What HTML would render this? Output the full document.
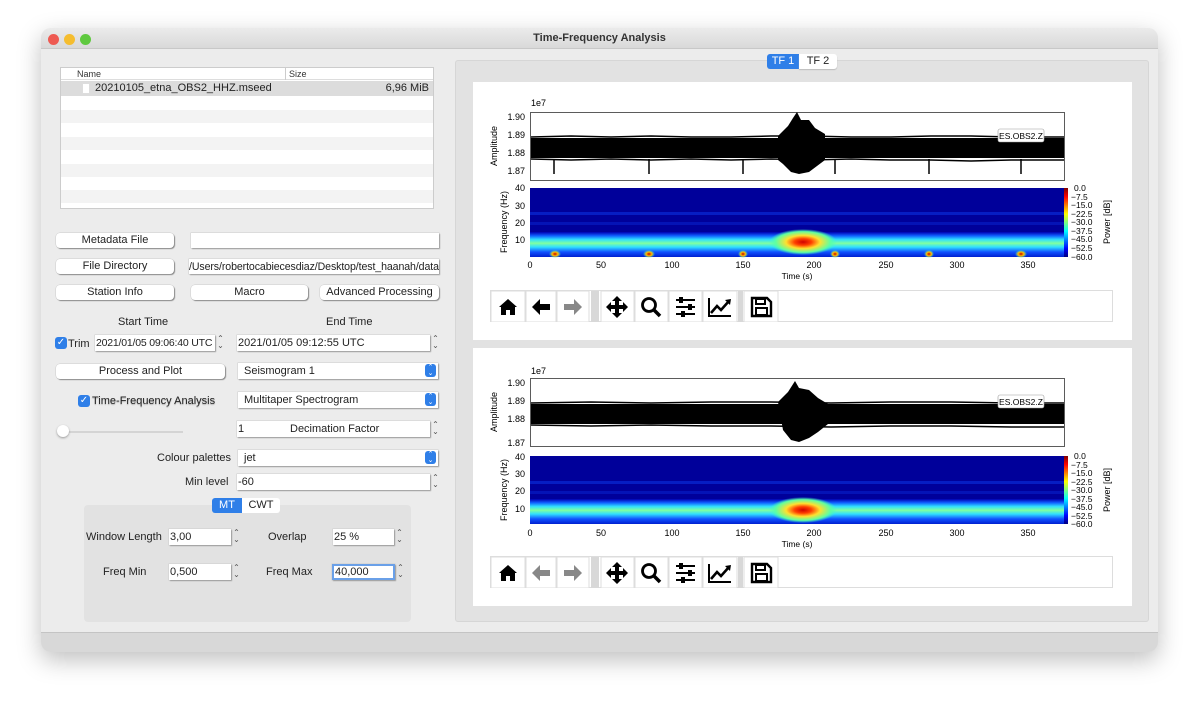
<!DOCTYPE html>
<html><head><meta charset="utf-8"><style>
*{box-sizing:border-box;margin:0;padding:0}
body{width:1200px;height:708px;background:#fff;font-family:"Liberation Sans",sans-serif;font-size:11px;color:#222;position:relative;overflow:hidden}
.a{position:absolute}
.win{left:41px;top:28px;width:1117px;height:624px;background:#ececec;border-radius:10px;box-shadow:0 8px 24px rgba(0,0,0,.25);overflow:hidden}
.title{left:0;top:0;width:1117px;height:21px;background:linear-gradient(#ebebeb,#d9d9d9);border-bottom:1px solid #c8c8c8;text-align:center;font-weight:bold;font-size:11px;line-height:21px;color:#333}
.dot{width:11px;height:11px;border-radius:50%;top:6px}
.btn{background:#fff;border-radius:4px;box-shadow:1px 1px 1px #888, 0 0 0 .5px #ccc;text-align:center;font-size:11px;line-height:15px;height:15px}
.field{background:#fff;box-shadow:1px 1px 1px #999, 0 0 0 .5px #ccc;font-size:11px;line-height:16px;height:16px;padding-left:4px;white-space:nowrap;overflow:hidden}
.spin{width:9px;height:16px;font-size:8px;line-height:7px;text-align:center;color:#555}
.sel{width:11px;height:13px;background:#2f7fe8;border-radius:3px;color:#fff;font-size:7px;line-height:6px;text-align:center;padding-top:1px}
.chk{width:12px;height:12px;background:#2f7fe8;border-radius:3px;color:#fff;font-size:10px;line-height:12px;text-align:center}
.lbl{font-size:11px}
.tb{background:#fff;height:32px;border:1px solid #ddd}
</style></head><body>
<div class="a win">
 <div class="a title">Time-Frequency Analysis</div>
 <div class="a dot" style="left:7px;background:#ee5a52"></div>
 <div class="a dot" style="left:23px;background:#f5bd2f"></div>
 <div class="a dot" style="left:39px;background:#5fc93f"></div>
 <div class="a" style="left:0;top:604px;width:1117px;height:20px;background:#d8d8d8;border-top:1px solid #c4c4c4"></div>
</div>
<!-- file list -->
<div class="a" style="left:60px;top:67px;width:374px;height:142px;background:#fff;border:1px solid #ccc">
 <div class="a" style="left:0;top:0;width:372px;height:12px;border-bottom:1px solid #ddd;font-size:9px;line-height:12px;color:#333"><span class="a" style="left:16px">Name</span><span class="a" style="left:224px;border-left:1px solid #ccc;padding-left:3px">Size</span></div>
 <div class="a" style="left:0;top:13px;width:372px;height:15px;background:#dcdcdc;font-size:11px;line-height:15px"><span class="a" style="left:21px;top:2px;width:8px;height:11px;background:#fff;border:1px solid #ddd"></span><span class="a" style="left:34px">20210105_etna_OBS2_HHZ.mseed</span><span class="a" style="right:4px">6,96 MiB</span></div>
 <div class="a" style="left:0;top:42px;width:372px;height:13px;background:#f3f3f3"></div>
 <div class="a" style="left:0;top:69px;width:372px;height:13px;background:#f3f3f3"></div>
 <div class="a" style="left:0;top:96px;width:372px;height:13px;background:#f3f3f3"></div>
 <div class="a" style="left:0;top:122px;width:372px;height:13px;background:#f3f3f3"></div>
</div>
<div class="a btn" style="left:56px;top:233px;width:118px">Metadata File</div>
<div class="a field" style="left:191px;top:233px;width:248px;height:15px"></div>
<div class="a btn" style="left:56px;top:259px;width:118px">File Directory</div>
<div class="a field" style="left:189px;top:259px;width:250px;height:15px;padding-left:0;font-size:10.6px;letter-spacing:-.1px">/Users/robertocabiecesdiaz/Desktop/test_haanah/data</div>
<div class="a btn" style="left:56px;top:285px;width:118px">Station Info</div>
<div class="a btn" style="left:191px;top:285px;width:117px">Macro</div>
<div class="a btn" style="left:320px;top:285px;width:119px">Advanced Processing</div>
<div class="a lbl" style="left:118px;top:316px">Start Time</div>
<div class="a lbl" style="left:326px;top:316px">End Time</div>
<div class="a chk" style="left:55px;top:337px">✓</div>
<div class="a lbl" style="left:68px;top:338px">Trim</div>
<div class="a field" style="left:95px;top:335px;width:120px;padding-left:1px;font-size:10.5px;letter-spacing:-.2px">2021/01/05 09:06:40 UTC</div>
<div class="a spin" style="left:216px;top:335px">⌃<br>⌄</div>
<div class="a field" style="left:237px;top:335px;width:193px;padding-left:1px">2021/01/05 09:12:55 UTC</div>
<div class="a spin" style="left:431px;top:335px">⌃<br>⌄</div>
<div class="a btn" style="left:56px;top:364px;width:169px">Process and Plot</div>
<div class="a field" style="left:238px;top:363px;width:200px;padding-left:6px">Seismogram 1</div>
<div class="a sel" style="left:425px;top:364px">⌃<br>⌄</div>
<div class="a chk" style="left:78px;top:395px">✓</div>
<div class="a lbl" style="left:92px;top:395px;text-shadow:0 1px 1px #aaa">Time-Frequency Analysis</div>
<div class="a field" style="left:238px;top:392px;width:200px;padding-left:6px">Multitaper Spectrogram</div>
<div class="a sel" style="left:425px;top:393px">⌃<br>⌄</div>
<div class="a" style="left:58px;top:431px;width:125px;height:2px;background:#d4d4d4"></div>
<div class="a" style="left:57px;top:425px;width:12px;height:12px;border-radius:50%;background:#fff;box-shadow:0 1px 2px #999"></div>
<div class="a field" style="left:237px;top:421px;width:193px;padding-left:1px">1<span class="a" style="left:53px">Decimation Factor</span></div>
<div class="a spin" style="left:431px;top:421px">⌃<br>⌄</div>
<div class="a lbl" style="left:157px;top:452px">Colour palettes</div>
<div class="a field" style="left:238px;top:450px;width:200px;padding-left:6px">jet</div>
<div class="a sel" style="left:425px;top:451px">⌃<br>⌄</div>
<div class="a lbl" style="left:185px;top:476px">Min level</div>
<div class="a field" style="left:237px;top:474px;width:193px;padding-left:1px">-60</div>
<div class="a spin" style="left:431px;top:474px">⌃<br>⌄</div>
<div class="a" style="left:84px;top:505px;width:327px;height:117px;background:#e2e2e2;border-radius:4px"></div>
<div class="a" style="left:212px;top:498px;width:30px;height:15px;background:#2f7fe8;color:#fff;text-align:center;line-height:15px;border-radius:3px 0 0 3px">MT</div>
<div class="a" style="left:242px;top:498px;width:38px;height:15px;background:#fff;text-align:center;line-height:15px;border-radius:0 3px 3px 0">CWT</div>
<div class="a lbl" style="left:86px;top:531px">Window Length</div>
<div class="a field" style="left:169px;top:529px;width:62px;padding-left:1px">3,00</div>
<div class="a spin" style="left:232px;top:529px">⌃<br>⌄</div>
<div class="a lbl" style="left:268px;top:531px">Overlap</div>
<div class="a field" style="left:333px;top:529px;width:61px;padding-left:1px">25 %</div>
<div class="a spin" style="left:395px;top:529px">⌃<br>⌄</div>
<div class="a lbl" style="left:103px;top:566px">Freq Min</div>
<div class="a field" style="left:169px;top:564px;width:62px;padding-left:1px">0,500</div>
<div class="a spin" style="left:232px;top:564px">⌃<br>⌄</div>
<div class="a lbl" style="left:266px;top:566px">Freq Max</div>
<div class="a field" style="left:332px;top:564px;width:63px;padding-left:1px;border:2px solid #6aa0e8;line-height:13px">40,000</div>
<div class="a spin" style="left:396px;top:564px">⌃<br>⌄</div>
<!-- right panel -->
<div class="a" style="left:455px;top:60px;width:694px;height:562px;background:#e2e2e2;border:1px solid #d6d6d6;border-radius:3px"></div>
<div class="a" style="left:767px;top:54px;width:32px;height:15px;background:#2f7fe8;color:#fff;text-align:center;line-height:15px;border-radius:3px 0 0 3px">TF 1</div>
<div class="a" style="left:799px;top:54px;width:38px;height:15px;background:#fff;text-align:center;line-height:15px;border-radius:0 3px 3px 0;box-shadow:0 1px 1px #bbb">TF 2</div>

<svg class="a" style="left:473px;top:82px" width="659" height="258" viewBox="0 0 659 258" font-family="Liberation Sans,DejaVu Sans,sans-serif" font-size="9">
<defs>
<linearGradient id="band" x1="0" y1="0" x2="0" y2="1">
<stop offset="0" stop-color="#0000b0"/><stop offset=".15" stop-color="#1060ff"/><stop offset=".3" stop-color="#30e0ff"/><stop offset=".45" stop-color="#80ffa0"/><stop offset=".6" stop-color="#30e0ff"/><stop offset=".8" stop-color="#1050ff"/><stop offset="1" stop-color="#0020d0"/></linearGradient>
<linearGradient id="cb" x1="0" y1="1" x2="0" y2="0">
<stop offset="0" stop-color="#00007f"/><stop offset=".125" stop-color="#0000ff"/><stop offset=".375" stop-color="#00ffff"/><stop offset=".625" stop-color="#ffff00"/><stop offset=".875" stop-color="#ff0000"/><stop offset="1" stop-color="#7f0000"/></linearGradient>
<radialGradient id="blob"><stop offset="0" stop-color="#d00000"/><stop offset=".25" stop-color="#ff4000"/><stop offset=".5" stop-color="#ffe030"/><stop offset=".8" stop-color="#60ffa0"/><stop offset="1" stop-color="#40ffc0" stop-opacity="0"/></radialGradient>
<radialGradient id="sp"><stop offset="0" stop-color="#c00000"/><stop offset=".5" stop-color="#ffc000"/><stop offset="1" stop-color="#40ffc0" stop-opacity="0"/></radialGradient>
</defs>
<rect width="659" height="258" fill="#fff"/>
<text x="58" y="24">1e7</text>
<rect x="57.5" y="30.5" width="534" height="68" fill="none" stroke="#333" stroke-width=".8"/>
<g text-anchor="end"><text x="52" y="38">1.90</text><text x="52" y="56">1.89</text><text x="52" y="74">1.88</text><text x="52" y="92">1.87</text></g>
<text transform="translate(24,64) rotate(-90)" text-anchor="middle">Amplitude</text>
<path d="M58,56 L591,56 L591,76 L58,76Z" fill="#000"/>
<path d="M58,55 l40,-1 l40,1 l40,-1 l40,1 l40,0 l40,-1 l40,0 l40,1 l40,0 l40,-1 l40,0 l40,1 l53,0" stroke="#000" stroke-width="1.5" fill="none"/>
<path d="M58,77 l40,1 l40,-1 l40,1 l40,-1 l40,1 l40,-1 l40,1 l40,-1 l40,1 l40,0 l40,1 l40,-1 l53,0" stroke="#000" stroke-width="1.5" fill="none"/>
<path d="M305,54 L315,44 L320,36 L324,30 L328,38 L336,38 L342,46 L352,52 L352,78 L344,84 L336,90 L326,92 L318,90 L310,82 L305,78Z" fill="#000"/>
<g stroke="#000" stroke-width="1.5"><line x1="81" y1="77" x2="81" y2="92"/><line x1="176" y1="77" x2="176" y2="92"/><line x1="270" y1="77" x2="270" y2="92"/><line x1="362" y1="77" x2="362" y2="92"/><line x1="456" y1="77" x2="456" y2="92"/><line x1="548" y1="77" x2="548" y2="92"/></g>
<rect x="525" y="47" width="46" height="13" rx="2" fill="#fff" stroke="#999" stroke-width=".6"/>
<text x="548" y="57" text-anchor="middle" font-size="8.5">ES.OBS2.Z</text>
<rect x="57" y="106" width="534" height="69" fill="#00009a"/>
<rect x="57" y="150" width="534" height="25" fill="url(#band)"/>
<rect x="57" y="130" width="534" height="3" fill="#0a30e0" opacity=".6"/>
<rect x="57" y="140" width="534" height="3" fill="#0a30e0" opacity=".4"/>
<ellipse cx="330" cy="160" rx="34" ry="13" fill="url(#blob)"/>
<g fill="url(#sp)"><ellipse cx="82" cy="172" rx="6" ry="4"/><ellipse cx="176" cy="172" rx="6" ry="4"/><ellipse cx="270" cy="172" rx="5" ry="4"/><ellipse cx="362" cy="172" rx="5" ry="4"/><ellipse cx="456" cy="172" rx="5" ry="4"/><ellipse cx="548" cy="172" rx="6" ry="4"/></g>
<rect x="591" y="106" width="4" height="69" fill="url(#cb)"/>
<g text-anchor="end"><text x="52" y="109">40</text><text x="52" y="127">30</text><text x="52" y="144">20</text><text x="52" y="161">10</text></g>
<text transform="translate(34,140) rotate(-90)" text-anchor="middle">Frequency (Hz)</text>
<g font-size="8.5"><text x="601" y="109">0.0</text><text x="598" y="118">−7.5</text><text x="598" y="126">−15.0</text><text x="598" y="135">−22.5</text><text x="598" y="143">−30.0</text><text x="598" y="152">−37.5</text><text x="598" y="160">−45.0</text><text x="598" y="169">−52.5</text><text x="598" y="178">−60.0</text></g>
<text transform="translate(637,140) rotate(-90)" text-anchor="middle">Power [dB]</text>
<g text-anchor="middle"><text x="57" y="186">0</text><text x="128" y="186">50</text><text x="199" y="186">100</text><text x="270" y="186">150</text><text x="341" y="186">200</text><text x="413" y="186">250</text><text x="484" y="186">300</text><text x="555" y="186">350</text><text x="324" y="197" font-size="8.5">Time (s)</text></g>
</svg>

<svg class="a" style="left:473px;top:348px" width="659" height="258" viewBox="0 0 659 258" font-family="Liberation Sans,DejaVu Sans,sans-serif" font-size="9">
<rect width="659" height="258" fill="#fff"/>
<text x="58" y="26">1e7</text>
<rect x="57.5" y="30.5" width="534" height="68" fill="none" stroke="#333" stroke-width=".8"/>
<g text-anchor="end"><text x="52" y="38">1.90</text><text x="52" y="56">1.89</text><text x="52" y="74">1.88</text><text x="52" y="98">1.87</text></g>
<text transform="translate(24,64) rotate(-90)" text-anchor="middle">Amplitude</text>
<path d="M58,56 L591,56 L591,76 L58,76Z" fill="#000"/>
<path d="M58,55 l60,-1 l60,1 l60,-1 l60,0 l60,1 l60,-1 l60,0 l60,1 l53,0" stroke="#000" stroke-width="1.5" fill="none"/>
<path d="M58,77 l60,1 l60,-1 l60,1 l60,0 l60,1 l60,-1 l60,0 l60,1 l53,0" stroke="#000" stroke-width="1.5" fill="none"/>
<path d="M305,54 L315,44 L322,33 L326,40 L336,42 L345,50 L355,56 L355,76 L345,84 L336,90 L326,94 L318,92 L310,82Z" fill="#000"/>
<rect x="525" y="47" width="46" height="13" rx="2" fill="#fff" stroke="#999" stroke-width=".6"/>
<text x="548" y="57" text-anchor="middle" font-size="8.5">ES.OBS2.Z</text>
<rect x="57" y="108" width="534" height="68" fill="#00009a"/>
<rect x="57" y="151" width="534" height="25" fill="url(#band)"/>
<rect x="57" y="133" width="534" height="3" fill="#0a30e0" opacity=".6"/>
<rect x="57" y="143" width="534" height="3" fill="#0a30e0" opacity=".4"/>
<ellipse cx="330" cy="162" rx="34" ry="13" fill="url(#blob)"/>
<rect x="591" y="108" width="4" height="68" fill="url(#cb)"/>
<g text-anchor="end"><text x="52" y="112">40</text><text x="52" y="129">30</text><text x="52" y="146">20</text><text x="52" y="164">10</text></g>
<text transform="translate(34,142) rotate(-90)" text-anchor="middle">Frequency (Hz)</text>
<g font-size="8.5"><text x="601" y="111">0.0</text><text x="598" y="120">−7.5</text><text x="598" y="128">−15.0</text><text x="598" y="137">−22.5</text><text x="598" y="145">−30.0</text><text x="598" y="154">−37.5</text><text x="598" y="162">−45.0</text><text x="598" y="171">−52.5</text><text x="598" y="179">−60.0</text></g>
<text transform="translate(637,142) rotate(-90)" text-anchor="middle">Power [dB]</text>
<g text-anchor="middle"><text x="57" y="188">0</text><text x="128" y="188">50</text><text x="199" y="188">100</text><text x="270" y="188">150</text><text x="341" y="188">200</text><text x="413" y="188">250</text><text x="484" y="188">300</text><text x="555" y="188">350</text><text x="324" y="199" font-size="8.5">Time (s)</text></g>
</svg>

<!-- toolbars -->
<div class="a tb" style="left:490px;top:290px;width:623px">
 <svg class="a" style="left:0;top:0" width="290" height="31" viewBox="0 0 290 31">
  <g fill="#fff" stroke="#ddd"><rect x="0" y="0" width="34" height="31"/><rect x="35" y="0" width="30" height="31"/><rect x="66" y="0" width="32" height="31"/><rect x="110" y="0" width="33" height="31"/><rect x="144" y="0" width="33" height="31"/><rect x="178" y="0" width="33" height="31"/><rect x="212" y="0" width="34" height="31"/><rect x="253" y="0" width="34" height="31"/></g>
  <rect x="100" y="0" width="8" height="31" fill="#d8d8d8"/><rect x="247" y="0" width="5" height="31" fill="#d8d8d8"/>
  <path d="M8,16 L17,8 L26,16 L24,16 L24,24 L19,24 L19,19 L15,19 L15,24 L10,24 L10,16Z" fill="#000"/>
  <path d="M41,16 L49,8 L49,13 L59,13 L59,19 L49,19 L49,24Z" fill="#000"/>
  <path d="M91,16 L83,8 L83,13 L73,13 L73,19 L83,19 L83,24Z" fill="#888"/>
  <path d="M126,5 L131,10 L128,10 L128,14 L132,14 L132,11 L137,16 L132,21 L132,18 L128,18 L128,22 L131,22 L126,27 L121,22 L124,22 L124,18 L120,18 L120,21 L115,16 L120,11 L120,14 L124,14 L124,10 L121,10Z" fill="#000"/>
  <circle cx="158" cy="14" r="6.5" fill="none" stroke="#000" stroke-width="2.8"/><path d="M162,18 L169,25" stroke="#000" stroke-width="3.5"/>
  <g stroke="#000" stroke-width="2"><path d="M185,9h19M185,16h19M185,23h19"/></g><g fill="#000"><rect x="188" y="6" width="4" height="6"/><rect x="197" y="13" width="4" height="6"/><rect x="190" y="20" width="4" height="6"/></g>
  <path d="M218,7 L218,25 L240,25" stroke="#000" stroke-width="2" fill="none"/><path d="M220,22 L226,15 L230,19 L238,10" stroke="#000" stroke-width="2.6" fill="none"/><path d="M234,9 L240,8 L239,14Z" fill="#000"/>
  <path d="M261,7 L276,7 L280,11 L280,25 L261,25Z" fill="none" stroke="#000" stroke-width="2.4"/><rect x="265" y="8" width="9" height="5" fill="none" stroke="#000" stroke-width="2"/><rect x="265" y="17" width="11" height="7" fill="none" stroke="#000" stroke-width="2"/>
 </svg>
</div>
<div class="a tb" style="left:490px;top:556px;width:623px">
 <svg class="a" style="left:0;top:0" width="290" height="31" viewBox="0 0 290 31">
  <g fill="#fff" stroke="#ddd"><rect x="0" y="0" width="34" height="31"/><rect x="35" y="0" width="30" height="31"/><rect x="66" y="0" width="32" height="31"/><rect x="110" y="0" width="33" height="31"/><rect x="144" y="0" width="33" height="31"/><rect x="178" y="0" width="33" height="31"/><rect x="212" y="0" width="34" height="31"/><rect x="253" y="0" width="34" height="31"/></g>
  <rect x="100" y="0" width="8" height="31" fill="#d8d8d8"/><rect x="247" y="0" width="5" height="31" fill="#d8d8d8"/>
  <path d="M8,16 L17,8 L26,16 L24,16 L24,24 L19,24 L19,19 L15,19 L15,24 L10,24 L10,16Z" fill="#000"/>
  <path d="M41,16 L49,8 L49,13 L59,13 L59,19 L49,19 L49,24Z" fill="#888"/>
  <path d="M91,16 L83,8 L83,13 L73,13 L73,19 L83,19 L83,24Z" fill="#888"/>
  <path d="M126,5 L131,10 L128,10 L128,14 L132,14 L132,11 L137,16 L132,21 L132,18 L128,18 L128,22 L131,22 L126,27 L121,22 L124,22 L124,18 L120,18 L120,21 L115,16 L120,11 L120,14 L124,14 L124,10 L121,10Z" fill="#000"/>
  <circle cx="158" cy="14" r="6.5" fill="none" stroke="#000" stroke-width="2.8"/><path d="M162,18 L169,25" stroke="#000" stroke-width="3.5"/>
  <g stroke="#000" stroke-width="2"><path d="M185,9h19M185,16h19M185,23h19"/></g><g fill="#000"><rect x="188" y="6" width="4" height="6"/><rect x="197" y="13" width="4" height="6"/><rect x="190" y="20" width="4" height="6"/></g>
  <path d="M218,7 L218,25 L240,25" stroke="#000" stroke-width="2" fill="none"/><path d="M220,22 L226,15 L230,19 L238,10" stroke="#000" stroke-width="2.6" fill="none"/><path d="M234,9 L240,8 L239,14Z" fill="#000"/>
  <path d="M261,7 L276,7 L280,11 L280,25 L261,25Z" fill="none" stroke="#000" stroke-width="2.4"/><rect x="265" y="8" width="9" height="5" fill="none" stroke="#000" stroke-width="2"/><rect x="265" y="17" width="11" height="7" fill="none" stroke="#000" stroke-width="2"/>
 </svg>
</div>
</body></html>
